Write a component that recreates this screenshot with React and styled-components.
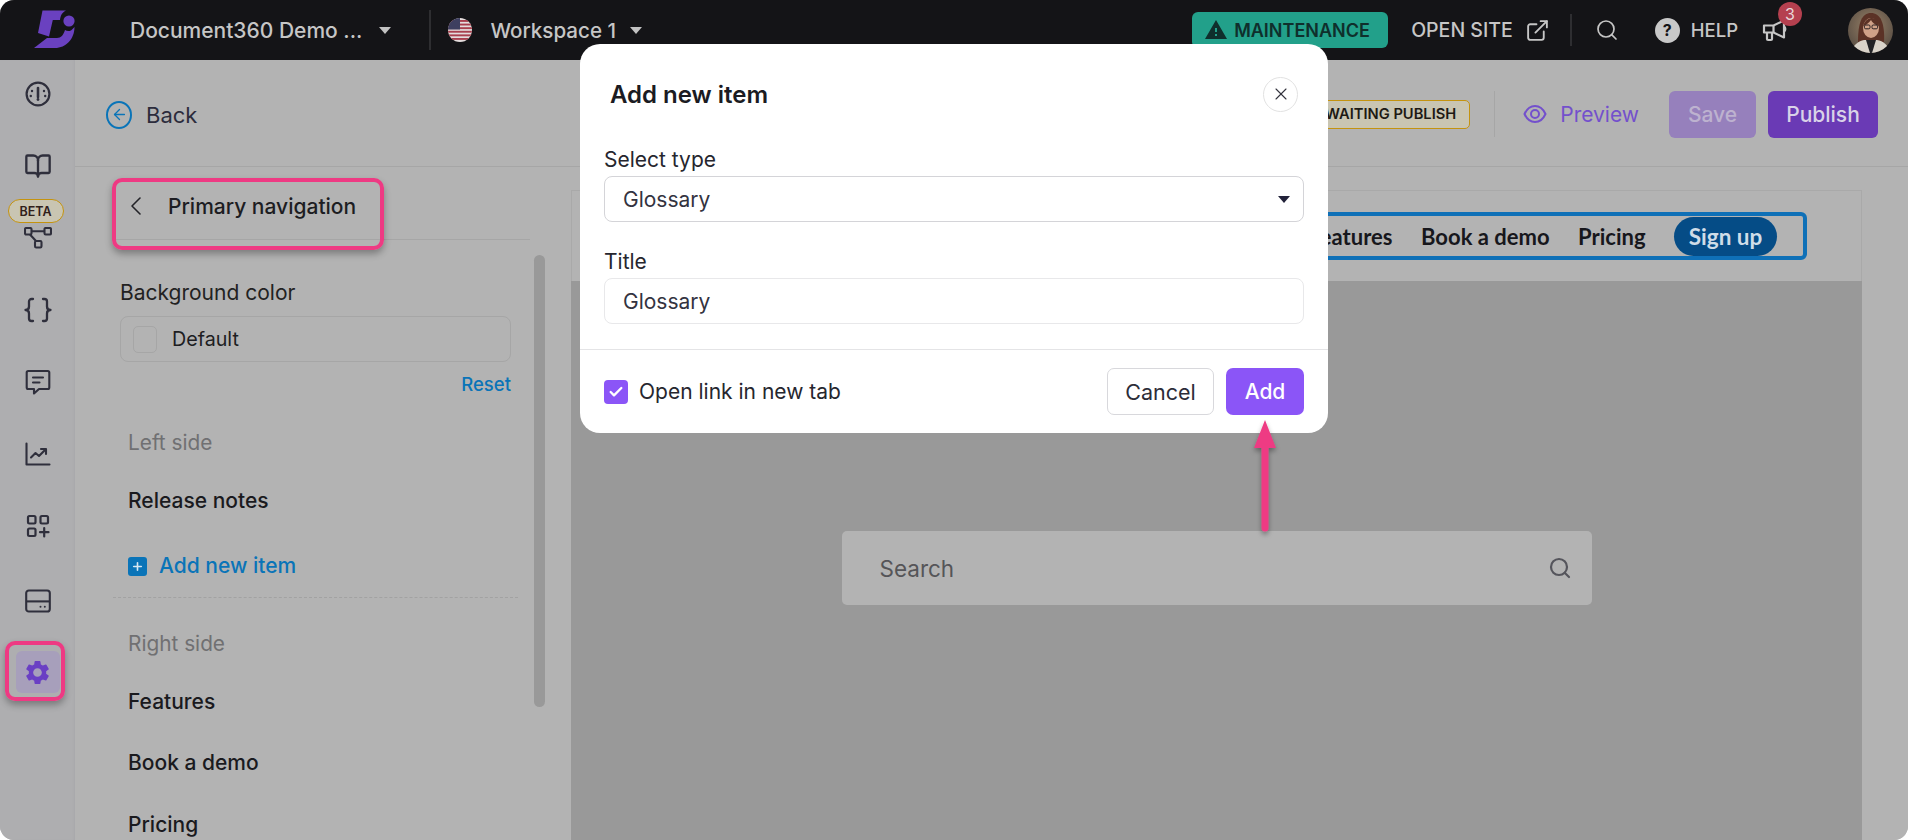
import React from 'react';
import styled, { createGlobalStyle } from 'styled-components';
import { BookOpen, ExternalLink, Search, X, ChevronLeft, ArrowLeft, Check, Plus } from 'lucide-react';
import { MdSettings, MdWarning } from 'react-icons/md';

const Global = createGlobalStyle`
  html, body { margin: 0; padding: 0; background: #fff; }
  * { box-sizing: border-box; }
  body { font-family: Inter, "Liberation Sans", sans-serif; }
`;

const Page = styled.div`
  position: relative; width: 1908px; height: 840px; overflow: hidden; border-radius: 14px;
  display: flex; flex-direction: column; background: #b3b3b3;
`;

/* top bar */
const TopBar = styled.header`
  height: 60px; flex: none; background: #141417; display: flex; align-items: center; color: #c8c8c8;
  position: relative;
`;
const LogoSlot = styled.svg`width: 60px; height: 60px; margin-left: 20px; flex: none;`;
const BarText = styled.span`
  font-size: ${p => p.$size || 20.6}px; font-weight: 500; color: #c6c6c6; white-space: nowrap;
  margin-left: ${p => p.$ml || 0}px;
`;
const Caret = styled.span`
  width: 0; height: 0; border-left: 6px solid transparent; border-right: 6px solid transparent;
  border-top: 7px solid ${p => p.$color || '#c2c2c2'}; margin-left: ${p => p.$ml || 0}px; flex: none;
`;
const BarDivider = styled.span`
  width: 2px; height: ${p => p.$h || 40}px; background: #2e2e31; flex: none; margin-left: ${p => p.$ml || 0}px;
`;
const Spacer = styled.span`flex: 1;`;
const Maintenance = styled.div`
  width: 196px; height: 36px; border-radius: 6px; background: #22a08a; color: #0f2f2c; font-size: 18px; font-weight: 600;
  display: flex; align-items: center; gap: 6px; padding-left: 12px; flex: none;
`;
const HelpDot = styled.span`
  width: 25px; height: 25px; border-radius: 50%; background: #c8c8c8; color: #141417; font-weight: 700; font-size: 16px;
  display: flex; align-items: center; justify-content: center; margin-left: 36px; flex: none;
`;
const MegaWrap = styled.span`position: relative; display: flex; margin-left: 24px; flex: none;`;
const Badge = styled.span`
  position: absolute; left: 16px; top: -15px; width: 24px; height: 24px; border-radius: 50%; background: #b5404f;
  color: #e8d8da; font-size: 16px; display: flex; align-items: center; justify-content: center;
`;
const Avatar = styled.svg`width: 45px; height: 45px; margin-left: 60px; margin-right: 15px; flex: none; border-radius: 50%;`;

/* body */
const Body = styled.div`flex: 1; display: flex; min-height: 0;`;
const Rail = styled.nav`
  width: 75px; flex: none; background: #aeaeb0; display: flex; flex-direction: column; align-items: center;
  padding-top: 20px; gap: 44px; color: #2f2f3c; box-shadow: inset -2px 0 3px -2px #a2a2a4;
`;
const RailItem = styled.div`
  position: relative; width: 44px; height: 28px; flex: none; display: flex; align-items: center; justify-content: center;
  margin-top: ${p => p.$mt || 0}px;
  ${p => p.$active && `&::before { content: ''; position: absolute; left: 0; right: 0; top: -7px; bottom: -7px; background: #a79fbb; border-radius: 6px; }`}
  & > svg { position: relative; }
`;
const Beta = styled.span`
  position: absolute; left: -8px; top: -25px; width: 56px; height: 24px; border-radius: 12px; background: #c9c5b2;
  border: 1px solid #c4930f; color: #30201a; font-size: 12.5px; font-weight: 600; display: flex; align-items: center; justify-content: center;
`;
const Main = styled.div`flex: 1; display: flex; flex-direction: column; min-width: 0;`;
const ActionBar = styled.div`
  height: 107px; flex: none; display: flex; align-items: center; background: #b3b3b3; border-bottom: 1px solid #a6a6a6; padding: 2px 0 0 31px;
`;
const BackIcon = styled.span`
  width: 26px; height: 28px; border-radius: 50%; border: 2px solid #0a74b8; color: #0a74b8; display: flex; align-items: center; justify-content: center; flex: none; margin-top: 1px;
`;
const BackText = styled.span`margin: 1px 0 0 14px; font-size: 22px; color: #2c2c3c;`;
const Chip = styled.span`
  width: 220px; height: 29px; border: 1px solid #c4930f; border-radius: 5px; background: #c9c5b2; color: #1e1a14; font-size: 14.7px; font-weight: 600;
  display: flex; align-items: center; justify-content: flex-end; padding-right: 13px; flex: none; white-space: nowrap;
`;
const HDivider = styled.span`width: 1px; height: 46px; background: #a6a6a6; margin-left: 24px; flex: none;`;
const PreviewLink = styled.span`
  display: flex; align-items: center; gap: 13px; margin-left: 28px; color: #7350cc; font-size: 21px; flex: none;
`;
const HeadButton = styled.span`
  height: 47px; width: ${p => p.$w}px; border-radius: 6px; background: ${p => p.$bg}; color: ${p => p.$fg}; font-size: 21px; font-weight: 500;
  display: flex; align-items: center; justify-content: center; margin-left: ${p => p.$ml}px; flex: none;
`;
const Content = styled.div`flex: 1; display: flex; min-height: 0;`;

/* left panel */
const Panel = styled.aside`width: 496px; flex: none; position: relative; overflow: hidden; background: #b3b3b3;`;
const PanelHead = styled.div`
  height: 73px; margin: 0 41px 0 37px; padding: 6px 0 0 8px; border-bottom: 1px solid #a6a6a6; display: flex; align-items: center; color: #232328;
`;
const PanelTitle = styled.span`margin-left: 16px; font-size: 21px; font-weight: 500; color: #1d1d22;`;
const PanelBody = styled.div`padding: 0 60px 0 45px;`;
const FieldLabel = styled.div`margin-top: 41px; font-size: 21px; line-height: 24px; color: #222;`;
const ColorField = styled.div`
  margin-top: 11px; height: 46px; border: 1px solid #a6a6a6; border-radius: 8px; display: flex; align-items: center; padding-left: 12px; font-size: 19.7px; color: #1d1d22;
`;
const Swatch = styled.span`width: 24px; height: 27px; border: 1px solid #a6a6a6; border-radius: 5px; margin-right: 15px;`;
const Reset = styled.div`margin-top: 10px; text-align: right; color: #0a74b8; font-size: 18.5px; line-height: 24px; font-weight: 500;`;
const SideLabel = styled.div`margin-top: ${p => p.$mt}px; padding-left: 8px; font-size: 20.8px; line-height: 24px; color: #707072;`;
const ListItem = styled.div`margin-top: ${p => p.$mt}px; padding-left: 8px; font-size: 21px; line-height: 24px; color: #1a1a1e; font-weight: 500; white-space: nowrap;`;
const AddLink = styled.div`
  margin-top: 41px; padding-left: 8px; display: flex; align-items: center; gap: 12px; font-size: 21px; line-height: 24px; color: #0a74b8; font-weight: 500;
`;
const PlusTile = styled.span`width: 19px; height: 19px; background: #0a74b8; border-radius: 3px; color: #d8e8f2; display: flex; align-items: center; justify-content: center;`;
const Dashed = styled.div`margin: 19px -7px 0 -7px; border-top: 1px dashed #a2a2a2;`;
const Thumb = styled.div`position: absolute; left: 459px; top: 88px; width: 11px; height: 452px; border-radius: 6px; background: #999;`;

/* preview */
const Stage = styled.div`flex: 1; display: flex; flex-direction: column; min-width: 0; padding: 23px 46px 0 0; background: #b3b3b3;`;
const SiteHeader = styled.div`
  height: 91px; flex: none; display: flex; align-items: center; justify-content: flex-end; padding-right: 54px; border: 1px solid #a9a9a9; border-bottom: 0; background: #b3b3b3;
`;
const NavBox = styled.div`
  height: 48px; border: 4px solid #0f70b7; border-radius: 6px; display: flex; align-items: center; gap: 28.5px; padding: 0 26px 0 24px;
  font-family: Lato, "Noto Sans", sans-serif; font-weight: 700; font-size: 22px; color: #17171c; white-space: nowrap;
`;
const SignUp = styled.span`
  width: 103px; height: 39px; border-radius: 20px; background: #054c86; color: #cfdde8; display: flex; align-items: center; justify-content: center; font-size: 22.5px;
`;
const Canvas = styled.div`flex: 1; background: #999; display: flex; justify-content: center; padding-top: 250px;`;
const SearchBox = styled.div`
  width: 750px; height: 74px; background: #b3b3b3; border-radius: 5px; display: flex; align-items: center; justify-content: space-between;
  padding: 0 20px 0 38px; font-size: 22.5px; color: #555558;
`;

/* modal */
const Modal = styled.div`
  position: absolute; left: 580px; top: 44px; width: 748px; height: 389px; background: #fff; border-radius: 20px; display: flex; flex-direction: column; color: #24242e;
`;
const ModalHead = styled.div`height: 100px; padding: 0 30px 0 30px; display: flex; align-items: center; justify-content: space-between; flex: none;`;
const ModalTitle = styled.h2`margin: 0; font-size: 24px; font-weight: 600; color: #1b1b22;`;
const CloseBtn = styled.span`width: 35px; height: 35px; border-radius: 50%; border: 1px solid #e2e2e2; display: flex; align-items: center; justify-content: center; color: #33333d;`;
const ModalBody = styled.div`padding: 4px 24px 0; flex: 1;`;
const Label = styled.div`font-size: 21px; line-height: 24px; color: #26262e; margin-top: ${p => p.$mt || 0}px;`;
const Field = styled.div`
  margin-top: 4px; height: 46px; border: 1px solid ${p => p.$strong ? '#d4d4d8' : '#e8e8ea'}; border-radius: 8px; display: flex; align-items: center; justify-content: space-between;
  padding: 0 13px 0 18px; font-size: 21px; color: #33333f;
`;
const ModalFoot = styled.div`
  height: 84px; flex: none; border-top: 1px solid #e4e4e6; display: flex; align-items: center; padding: 0 24px;
`;
const CheckTile = styled.span`width: 24px; height: 24px; background: #8b55f7; border-radius: 4px; color: #fff; display: flex; align-items: center; justify-content: center; flex: none;`;
const CheckLabel = styled.span`margin-left: 11px; font-size: 21px; color: #26262e; flex: 1;`;
const CancelBtn = styled.span`width: 107px; height: 47px; border: 1px solid #d8d8dc; border-radius: 7px; display: flex; align-items: center; justify-content: center; font-size: 21.5px; color: #2c2c38;`;
const AddBtn = styled.span`width: 78px; height: 47px; margin-left: 12px; background: #8b55f7; border-radius: 7px; display: flex; align-items: center; justify-content: center; font-size: 21px; font-weight: 500; color: #fff;`;

/* annotations */
const Mark = styled.div`
  position: absolute; left: ${p => p.$x}px; top: ${p => p.$y}px; width: ${p => p.$w}px; height: ${p => p.$h}px;
  border: 4px solid #ee3a83; border-radius: 10px; box-shadow: 0 4px 7px rgba(0,0,0,.3);
`;
const ArrowSvg = styled.svg`position: absolute; left: 1245px; top: 415px; width: 40px; height: 125px; overflow: visible;`;

const Logo = () => (
  <LogoSlot viewBox="20 0 60 60" fill="#6a41c0">
    <path d="M42.500 10.500H66C62 12.500 60.500 15.500 60 20H52.800L49 36.500L38 33Z" />
    <path d="M34 48L47 38H57C61 38 63.500 35 65 30C68 32 71 31.500 74.500 27C74.500 39 66 48 55 48Z" />
    <circle cx="69" cy="21" r="5.600" />
  </LogoSlot>
);
const Flag = () => (
  <svg width="24" height="24" viewBox="0 0 24 24" style={{ marginLeft: 17, flex: 'none', borderRadius: '50%' }}>
    <rect width="24" height="24" fill="#e4dcdc" />
    {[2, 5.6, 9.2, 12.8, 16.4, 20].map(y => <rect key={y} x="0" y={y} width="24" height="1.9" fill="#a8404e" />)}
    <rect width="12" height="11.5" fill="#3e3f60" />
  </svg>
);
const Gauge = () => (
  <svg width="26" height="26" viewBox="0 0 26 26" fill="none" stroke="currentColor" strokeWidth="2.2" strokeLinecap="round">
    <circle cx="13" cy="13" r="11.4" />
    <path d="M13 7v9" strokeWidth="2.6" />
    <circle cx="13" cy="18.5" r="1.4" fill="currentColor" stroke="none" />
    <circle cx="7" cy="10" r="1.2" fill="currentColor" stroke="none" />
    <circle cx="19" cy="10" r="1.2" fill="currentColor" stroke="none" />
    <circle cx="5.800" cy="15" r="1.2" fill="currentColor" stroke="none" />
    <circle cx="20.200" cy="15" r="1.2" fill="currentColor" stroke="none" />
  </svg>
);
const Flow = () => (
  <svg width="28" height="22" viewBox="0 0 28 22" fill="none" stroke="currentColor" strokeWidth="2.1" strokeLinejoin="round">
    <rect x="1" y="1" width="6.5" height="6.5" rx="1.2" />
    <rect x="20.5" y="1" width="6.5" height="6.5" rx="1.2" />
    <rect x="11" y="14" width="6.5" height="6.5" rx="1.2" />
    <path d="M7.5 4.2H20.5M6 7.500L12 14" />
  </svg>
);
const CurlyBraces = () => (
  <svg width="28" height="26" viewBox="0 0 28 26" fill="none" stroke="currentColor" strokeWidth="2.3" strokeLinecap="round" strokeLinejoin="round">
    <path d="M9 2H7.500A2.500 2.500 0 0 0 5 4.500V9.500C5 11.500 3.500 13 1.500 13C3.500 13 5 14.500 5 16.500V21.500A2.500 2.500 0 0 0 7.500 24H9" />
    <path d="M19 2H20.500A2.500 2.500 0 0 1 23 4.500V9.500C23 11.500 24.500 13 26.500 13C24.500 13 23 14.500 23 16.500V21.500A2.500 2.500 0 0 1 20.500 24H19" />
  </svg>
);
const Chat = () => (
  <svg width="26" height="26" viewBox="0 0 26 26" fill="none" stroke="currentColor" strokeWidth="2.1" strokeLinejoin="round" strokeLinecap="round">
    <path d="M3.200 2h19.600a1.500 1.500 0 0 1 1.500 1.500v15a1.500 1.500 0 0 1-1.500 1.500H14l-5 4.500V20H3.200a1.500 1.500 0 0 1-1.500-1.500v-15A1.500 1.500 0 0 1 3.200 2Z" />
    <path d="M8 8.500h10M8 13.500h6.500" />
  </svg>
);
const Trend = () => (
  <svg width="26" height="24" viewBox="0 0 26 24" fill="none" stroke="currentColor" strokeWidth="2.1" strokeLinecap="round" strokeLinejoin="round">
    <path d="M1.500 1.500V22.500H24.500" />
    <path d="M6 15.500L10.500 11L14 14L20.500 7.500" />
    <path d="M16 7H21V12" />
  </svg>
);
const Apps = () => (
  <svg width="24" height="24" viewBox="0 0 24 24" fill="none" stroke="currentColor" strokeWidth="2.2" strokeLinecap="round">
    <rect x="2" y="2" width="7.5" height="7.5" rx="1.4" />
    <rect x="14.5" y="2" width="7.5" height="7.5" rx="1.4" />
    <rect x="2" y="14.5" width="7.5" height="7.5" rx="1.4" />
    <path d="M18.2 14v8.5M14 18.2h8.5" />
  </svg>
);
const Panelish = () => (
  <svg width="26" height="24" viewBox="0 0 26 24" fill="none" stroke="currentColor" strokeWidth="2.1">
    <rect x="1.2" y="1.5" width="23.6" height="21" rx="2.6" />
    <path d="M1.2 12.4H24.8" />
    <circle cx="15.5" cy="17.8" r="1" fill="currentColor" stroke="none" />
    <circle cx="19.8" cy="17.8" r="1" fill="currentColor" stroke="none" />
  </svg>
);
const Eye = () => (
  <svg width="24" height="24" viewBox="0 0 24 24" fill="none" stroke="currentColor" strokeWidth="2">
    <path d="M1.500 12C4 6.500 7.500 4 12 4s8 2.500 10.500 8c-2.500 5.500-6 8-10.500 8S4 17.500 1.500 12Z" />
    <circle cx="12" cy="12" r="4" />
  </svg>
);
const Mega = () => (
  <svg width="26" height="26" viewBox="0 0 26 26" fill="none" stroke="#c6c6c6" strokeWidth="2.2" strokeLinejoin="round">
    <path d="M2 8.500h9.500L22 3.500v17l-10.500-5H2Z" />
    <path d="M5 15.500v6.500a1 1 0 0 0 1 1h3a1 1 0 0 0 1-1v-6.500M11.500 8.500v7" />
    <path d="M22 9.500a3 3 0 0 1 0 5" />
  </svg>
);
const Portrait = () => (
  <Avatar viewBox="0 0 45 45">
    <defs>
      <radialGradient id="bgp" cx="0.5" cy="0.4" r="0.7"><stop offset="0" stopColor="#9a8268" /><stop offset="1" stopColor="#4f463e" /></radialGradient>
    </defs>
    <rect width="45" height="45" fill="url(#bgp)" />
    <path d="M10 34C10 14 14 5 23 5s14 9 13 29l-5 3H13Z" fill="#5b3226" />
    <path d="M3 45c1-8 8-12 13-13h13c6 1 12 5 13 13Z" fill="#d9d3ca" />
    <path d="M18 32l4 13h2l4-13Z" fill="#222226" />
    <ellipse cx="23" cy="20" rx="8" ry="10" fill="#cfa188" />
    <path d="M15 18c2-6 6-8 9-8 4 0 7 3 7 8-4-1-7-4-8-6-2 3-5 5-8 6Z" fill="#5b3226" />
    <rect x="16.500" y="17" width="5.500" height="3.800" rx="1.200" fill="none" stroke="#2a2022" strokeWidth="1" />
    <rect x="24" y="17" width="5.500" height="3.800" rx="1.200" fill="none" stroke="#2a2022" strokeWidth="1" />
  </Avatar>
);

export default function App() {
  return (
    <>
      <Global />
      <Page>
        <TopBar>
          <Logo />
          <BarText $ml={50} $size={21}>Document360 Demo ...</BarText>
          <Caret $ml={17} />
          <BarDivider $ml={38} />
          <Flag />
          <BarText $ml={18}>Workspace 1</BarText>
          <Caret $ml={14} />
          <Spacer />
          <Maintenance><MdWarning size={24} color="#0f2f2c" />MAINTENANCE</Maintenance>
          <BarText $ml={23} $size={19.5}>OPEN SITE</BarText>
          <ExternalLink size={25} strokeWidth={1.8} color="#c6c6c6" style={{ marginLeft: 12, flex: 'none' }} />
          <BarDivider $ml={20} $h={32} />
          <Search size={24} strokeWidth={1.7} color="#c6c6c6" style={{ marginLeft: 23, flex: 'none' }} />
          <HelpDot>?</HelpDot>
          <BarText $ml={11} $size={18.5}>HELP</BarText>
          <MegaWrap>
            <Mega />
            <Badge>3</Badge>
          </MegaWrap>
          <Portrait />
        </TopBar>
        <Body>
          <Rail>
            <RailItem><Gauge /></RailItem>
            <RailItem><BookOpen size={28} strokeWidth={2} /></RailItem>
            <RailItem><Beta>BETA</Beta><Flow /></RailItem>
            <RailItem><CurlyBraces /></RailItem>
            <RailItem><Chat /></RailItem>
            <RailItem><Trend /></RailItem>
            <RailItem><Apps /></RailItem>
            <RailItem $mt={3}><Panelish /></RailItem>
            <RailItem $active $mt={-1}><MdSettings size={29} color="#6a3fc4" /></RailItem>
          </Rail>
          <Main>
            <ActionBar>
              <BackIcon><ArrowLeft size={17} strokeWidth={1.8} /></BackIcon>
              <BackText>Back</BackText>
              <span style={{ flex: 1 }} />
              <Chip>WAITING PUBLISH</Chip>
              <HDivider />
              <PreviewLink><Eye />Preview</PreviewLink>
              <HeadButton $w={87} $ml={30} $bg="#9680bc" $fg="#bdb2cf">Save</HeadButton>
              <HeadButton $w={110} $ml={12} $bg="#6a3ab5" $fg="#d9d2e8">Publish</HeadButton>
              <span style={{ width: 30, flex: 'none' }} />
            </ActionBar>
            <Content>
              <Panel>
                <PanelHead>
                  <ChevronLeft size={32} strokeWidth={1.2} />
                  <PanelTitle>Primary navigation</PanelTitle>
                </PanelHead>
                <PanelBody>
                  <FieldLabel>Background color</FieldLabel>
                  <ColorField><Swatch />Default</ColorField>
                  <Reset>Reset</Reset>
                  <SideLabel $mt={35}>Left side</SideLabel>
                  <ListItem $mt={34}>Release notes</ListItem>
                  <AddLink><PlusTile><Plus size={13} strokeWidth={3} /></PlusTile>Add new item</AddLink>
                  <Dashed />
                  <SideLabel $mt={34}>Right side</SideLabel>
                  <ListItem $mt={34}>Features</ListItem>
                  <ListItem $mt={37}>Book a demo</ListItem>
                  <ListItem $mt={38}>Pricing</ListItem>
                </PanelBody>
                <Thumb />
              </Panel>
              <Stage>
                <SiteHeader>
                  <NavBox>
                    <span>Features</span>
                    <span>Book a demo</span>
                    <span>Pricing</span>
                    <SignUp>Sign up</SignUp>
                  </NavBox>
                </SiteHeader>
                <Canvas>
                  <SearchBox>
                    Search
                    <Search size={24} strokeWidth={2.2} color="#55555c" />
                  </SearchBox>
                </Canvas>
              </Stage>
            </Content>
          </Main>
        </Body>

        <Mark $x={112} $y={178} $w={272} $h={72} />
        <Mark $x={5} $y={641} $w={60} $h={60} />

        <Modal>
          <ModalHead>
            <ModalTitle>Add new item</ModalTitle>
            <CloseBtn><X size={20} strokeWidth={1.3} /></CloseBtn>
          </ModalHead>
          <ModalBody>
            <Label>Select type</Label>
            <Field $strong>Glossary<Caret $color="#22223a" /></Field>
            <Label $mt={28}>Title</Label>
            <Field>Glossary</Field>
          </ModalBody>
          <ModalFoot>
            <CheckTile><Check size={16} strokeWidth={3.5} /></CheckTile>
            <CheckLabel>Open link in new tab</CheckLabel>
            <CancelBtn>Cancel</CancelBtn>
            <AddBtn>Add</AddBtn>
          </ModalFoot>
        </Modal>
        <ArrowSvg viewBox="0 0 40 125">
          <defs>
            <filter id="as" x="-60%" y="-10%" width="220%" height="125%"><feDropShadow dx="0" dy="3" stdDeviation="2.500" floodColor="#000" floodOpacity=".35" /></filter>
          </defs>
          <path d="M20 5L31 33H23.500V113a3.500 3.500 0 0 1-7 0V33H9Z" fill="#ee3a83" filter="url(#as)" />
        </ArrowSvg>
      </Page>
    </>
  );
}
